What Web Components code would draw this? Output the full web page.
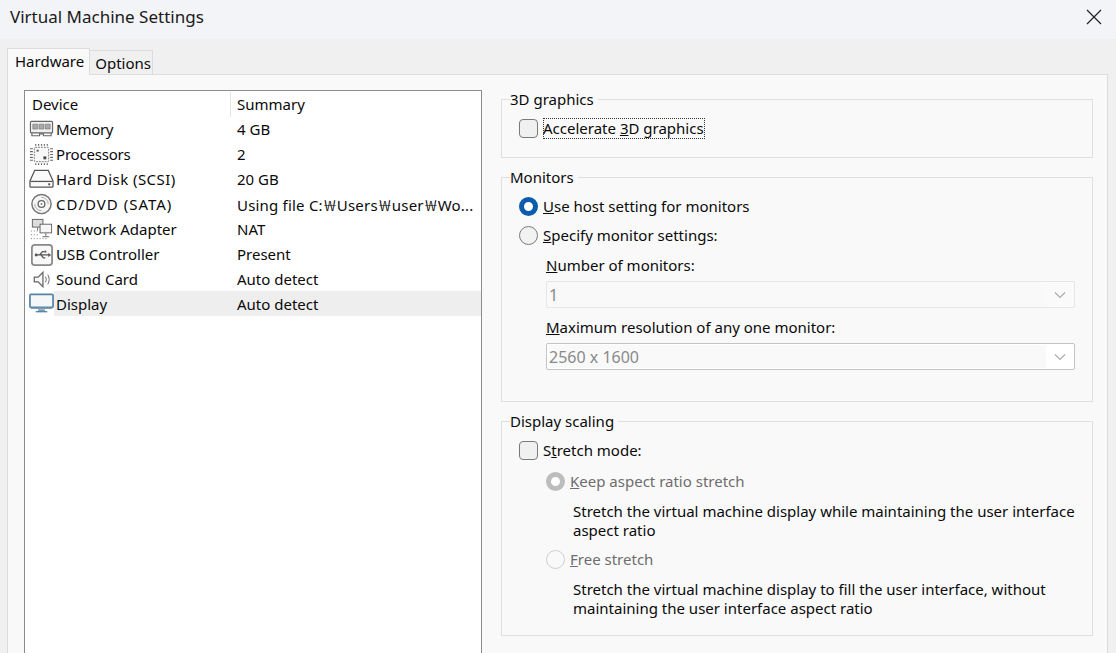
<!DOCTYPE html>
<html>
<head>
<meta charset="utf-8">
<title>Virtual Machine Settings</title>
<style>
  html, body { margin: 0; height: 100%; overflow: hidden; }
  body { font: 15px/21px "Noto Sans", "Open Sans", sans-serif; color: #0a0a0a; background: #f0f0f0; }
</style>
</head>
<body>

<vm-dialog>
  <span slot="title">Virtual Machine Settings</span>

  <device-list slot="left">
    <device-row name="Memory" summary="4 GB" icon="memory" style="--name-spacing:-.3px"></device-row>
    <device-row name="Processors" summary="2" icon="cpu" style="--name-spacing:-.2px"></device-row>
    <device-row name="Hard Disk (SCSI)" summary="20 GB" icon="disk" style="--name-spacing:.45px"></device-row>
    <device-row name="CD/DVD (SATA)" summary="Using file C:₩Users₩user₩Wo..." icon="cd" style="--name-spacing:1px; --sum-spacing:.2px"></device-row>
    <device-row name="Network Adapter" summary="NAT" icon="net"></device-row>
    <device-row name="USB Controller" summary="Present" icon="usb"></device-row>
    <device-row name="Sound Card" summary="Auto detect" icon="sound"></device-row>
    <device-row name="Display" summary="Auto detect" icon="display" selected></device-row>
  </device-list>

  <div slot="right">
    <group-box label="3D graphics" style="height:59px">
      <check-box focused>Accelerate <u>3</u>D graphics</check-box>
    </group-box>

    <group-box label="Monitors" style="height:225px; margin-top:19px">
      <radio-option checked>
        <u>U</u>se host setting for monitors</radio-option>
      <radio-option style="margin-top:8px"><u>S</u>pecify monitor settings:</radio-option>
      <combo-box value="1" style="margin-top:9px"><u>N</u>umber of monitors:</combo-box>
      <combo-box value="2560 x 1600" inner style="margin-top:9px"><u>M</u>aximum resolution of any one monitor:</combo-box>
    </group-box>

    <group-box label="Display scaling" style="height:215px; margin-top:19px">
      <check-box>S<u>t</u>retch mode:</check-box>
      <radio-option checked disabled indent style="margin-top:10px"><u>K</u>eep aspect ratio stretch</radio-option>
      <option-note>Stretch the virtual machine display while maintaining the user interface aspect ratio</option-note>
      <radio-option disabled indent style="margin-top:9px"><u>F</u>ree stretch</radio-option>
      <option-note>Stretch the virtual machine display to fill the user interface, without maintaining the user interface aspect ratio</option-note>
    </group-box>
  </div>
</vm-dialog>

<script>
// Icons for the device list, all on a 26x24 box
const deviceIcons = {
  memory: `<rect x="1.500" y="3.500" width="23" height="12" rx="1" fill="#f0f0f0" stroke="#666" stroke-width="1.200"/>
    <path d="M4 6.500h5v5H4zM10.500 6.500h5v5h-5zM17 6.500h5v5h-5z" fill="#aaa" stroke="#777" stroke-width=".7"/>
    <path d="M3 15.500v3h8v-2h4v2h8v-3" fill="none" stroke="#666" stroke-width="1.200"/>`,
  cpu: `<rect x="5.500" y="4.500" width="15" height="15" rx="1" fill="#f7f7f7" stroke="#777" stroke-dasharray="2 1"/>
    <path d="M7 1v2M10 1v2M13 1v2M16 1v2M19 1v2M7 21v2M10 21v2M13 21v2M16 21v2M19 21v2M1 6h3M1 9h3M1 12h3M1 15h3M1 18h3M22 6h3M22 9h3M22 12h3M22 15h3M22 18h3" stroke="#666" stroke-width="1.200"/>
    <rect x="8" y="7" width="2" height="2" fill="#555"/><rect x="15" y="14" width="3" height="3" fill="#444"/>`,
  disk: `<path d="M6 2.500h14l5 11v5.500a1 1 0 0 1-1 1H2a1 1 0 0 1-1-1v-5.500z" fill="#fafafa" stroke="#555" stroke-width="1.300"/>
    <path d="M1.500 14h23" stroke="#555" stroke-width="1.300"/><rect x="20" y="16" width="2" height="2" fill="#555"/>`,
  cd: `<circle cx="13" cy="11.500" r="10" fill="#f5f5f5" stroke="#777" stroke-width="1.500"/>
    <circle cx="13" cy="11.500" r="3.500" fill="#fff" stroke="#666" stroke-width="1.400"/><circle cx="13" cy="11.500" r="1" fill="#777"/>
    <path d="M13 4.500a7 7 0 0 1 7 7M13 18.500a7 7 0 0 1-7-7" fill="none" stroke="#aaa"/>`,
  net: `<rect x="3.500" y="1.500" width="11" height="8" fill="#ddd" stroke="#666"/><rect x="11.500" y="6.500" width="12" height="9" fill="#f6f6f6" stroke="#666"/>
    <path d="M9 10v3M17.500 16v3M14 19.500h7" stroke="#666"/><path d="M2 13.500h8M2 17.500h1M5 17.500h1M8 17.500h1M2 21.500h16" stroke="#777" stroke-dasharray="1 2"/>`,
  usb: `<rect x="3" y="2" width="21" height="21" rx="3" fill="#f8f8f8" stroke="#888" stroke-width="1.800"/>
    <path d="M7.500 12.500h13M11 12.500l3-3.500h2M12.500 12.500l2.500 3h2" fill="none" stroke="#555" stroke-width="1.300"/>
    <circle cx="7.500" cy="12.500" r="1.500" fill="#555"/><rect x="16" y="8" width="2" height="2" fill="#555"/><path d="M20 10.500l3 2-3 2z" fill="#555"/>`,
  sound: `<path d="M5.500 9.500h4l5-5v15l-5-5h-4z" fill="#f7f7f7" stroke="#666" stroke-width="1.300"/>
    <path d="M17 9c1.200 1.800 1.200 4.200 0 6M19.500 7c2 3 2 7 0 10" fill="none" stroke="#666"/>`,
  display: `<rect x="1" y="1.500" width="24" height="13.500" rx="1" fill="#f4f6f8" stroke="#5784a6" stroke-width="1.800"/>
    <path d="M2 16h22" stroke="#7c9cb4" stroke-width="1.500"/><path d="M9.500 17h7v2h-7z" fill="#7c9cb4"/><path d="M7 19.500h12" stroke="#4d7a9c" stroke-width="1.300"/>`
};

/**
 * Dialog frame: title bar, tab strip and the page with two columns.
 */
class VmDialog extends HTMLElement {
  constructor() {
    super();
    this.attachShadow({ mode: "open" });
    this.shadowRoot.innerHTML = `
      <style>
        :host { display: flex; flex-direction: column; height: 100vh; }
        .titlebar { flex: none; box-sizing: border-box; height: 39px; padding: 0 0 6px 10px; background: #f3f4f8; display: flex; align-items: center; justify-content: space-between; font-size: 17px; color: #1a1a1a; }
        .close { width: 16px; height: 16px; margin-right: 14px; }
        .tabs { flex: none; height: 35px; padding-left: 7px; display: flex; align-items: flex-end; }
        .tab { box-sizing: border-box; background: #f0f0f0; border: 1px solid #dcdcdc; border-bottom: 0; height: 24px; padding: 2px 1px 0 5px; margin-left: -1px; }
        .tab.active { background: #f9f9f9; height: 27px; padding: 2px 5px 0 7px; margin: 0 0 -1px 0; position: relative; z-index: 1; }
        .page { flex: 1; min-height: 0; margin: 0 8px 0 7px; box-sizing: border-box; background: #f9f9f9; border: 1px solid #dcdcdc; border-bottom: 0; padding: 15px 14px 0 16px; display: grid; grid-template-columns: 458px 1fr; column-gap: 19px; }
        .right { padding-top: 9px; }
      </style>
      <div class="titlebar">
        <slot name="title"></slot>
        <svg class="close" viewBox="0 0 16 16"><path d="M1 1l14 14M15 1L1 15" stroke="#222" stroke-width="1.200"/></svg>
      </div>
      <div class="tabs"><div class="tab active">Hardware</div><div class="tab">Options</div></div>
      <div class="page">
        <slot name="left"></slot>
        <div class="right"><slot name="right"></slot></div>
      </div>`;
  }
}

/**
 * Device table with its header row. Rows are passed in through the slot.
 */
class DeviceList extends HTMLElement {
  constructor() {
    super();
    this.attachShadow({ mode: "open" });
    this.shadowRoot.innerHTML = `
      <style>
        :host { display: block; background: #fff; border: 1px solid #8c8c8c; border-bottom: 0; min-height: 0; box-sizing: border-box; }
        .head { display: grid; grid-template-columns: 205px 1fr; height: 24px; padding-top: 1px; line-height: 24px; }
        .head div { padding-left: 7px; height: 25px; }
        .head div + div { border-left: 1px solid #e5e5e5; padding-left: 6px; }
      </style>
      <div class="head"><div>Device</div><div>Summary</div></div>
      <slot></slot>`;
  }
}

/**
 * One row of the device table.
 */
class DeviceRow extends HTMLElement {
  constructor() {
    super();
    this.attachShadow({ mode: "open" });
  }

  connectedCallback() {
    const icon = deviceIcons[this.getAttribute("icon")];
    // the won sign stands in for the backslash, it is drawn wide in the reference
    const summary = this.getAttribute("summary").replace(/₩/g, '<span class="won">₩</span>');
    this.shadowRoot.innerHTML = `
      <style>
        :host { display: grid; grid-template-columns: 29px 178px 1fr; grid-template-rows: 25px; height: 25px; line-height: 27px; white-space: nowrap; }
        svg { width: 25px; height: 25px; margin: 1px 0 0 4px; }
        .name { padding-left: 2px; height: 25px; letter-spacing: var(--name-spacing, 0); }
        .sum { padding-left: 5px; height: 25px; overflow: hidden; letter-spacing: var(--sum-spacing, 0); }
        .won { display: inline-block; width: 14px; text-align: center; font-family: "Noto Sans CJK KR", sans-serif; font-weight: 300; transform: scaleX(1.4); }
        :host([selected]) .name, :host([selected]) .sum { background: #eeeeee; }
      </style>
      <svg viewBox="0 0 26 24">${icon}</svg>
      <div class="name">${this.getAttribute("name")}</div>
      <div class="sum">${summary}</div>`;
  }
}

/**
 * Titled group frame with its legend sitting on the top border.
 */
class GroupBox extends HTMLElement {
  constructor() {
    super();
    this.attachShadow({ mode: "open" });
  }

  connectedCallback() {
    this.shadowRoot.innerHTML = `
      <style>
        :host { display: block; box-sizing: border-box; border: 1px solid #dfdfdf; padding: 0 17px 0 17px; }
        .legend { display: table; margin: -11px 0 8px -9px; height: 21px; padding: 0 4px 0 0; background: #f9f9f9; }
      </style>
      <div class="legend">${this.getAttribute("label")}</div>
      <slot></slot>`;
  }
}

/**
 * Checkbox with a label, optionally showing the dotted focus box.
 */
class CheckBox extends HTMLElement {
  constructor() {
    super();
    this.attachShadow({ mode: "open" });
    this.shadowRoot.innerHTML = `
      <style>
        :host { display: flex; align-items: center; height: 21px; gap: 5px; }
        .box { flex: none; box-sizing: border-box; width: 19px; height: 19px; border: 1px solid #7a7a7a; border-radius: 4px; background: #f0f0f0; }
        .label { padding: 0 1px 0 0; }
        :host([focused]) .label { outline: 1px dotted #333; outline-offset: -1px; }
      </style>
      <span class="box"></span><span class="label"><slot></slot></span>`;
  }
}

/**
 * Radio option, may be checked, disabled or indented under a checkbox.
 */
class RadioOption extends HTMLElement {
  constructor() {
    super();
    this.attachShadow({ mode: "open" });
    this.shadowRoot.innerHTML = `
      <style>
        :host { display: flex; align-items: center; height: 21px; gap: 5px; }
        :host([indent]) { margin-left: 27px; }
        :host([disabled]) { color: #6d6d6d; }
        .dot { flex: none; box-sizing: border-box; width: 19px; height: 19px; border-radius: 50%; border: 1px solid #7a7a7a; background: #f2f2f2; }
        :host([checked]) .dot { border: 5.500px solid #0b5cad; background: #fff; }
        :host([disabled]) .dot { border-color: #cfcfcf; background: #f9f9f9; }
        :host([disabled][checked]) .dot { border-color: #bdbdbd; background: #fff; }
      </style>
      <span class="dot"></span><span><slot></slot></span>`;
  }
}

/**
 * Label with a disabled drop-down under it.
 */
class ComboBox extends HTMLElement {
  constructor() {
    super();
    this.attachShadow({ mode: "open" });
  }

  connectedCallback() {
    this.shadowRoot.innerHTML = `
      <style>
        :host { display: block; margin-left: 27px; }
        .field { box-sizing: border-box; height: 27px; margin-top: 5px; display: flex; align-items: center; justify-content: space-between; background: #fafafa; border: 1px solid #e6e6e6; border-radius: 2px; padding-left: 2px; color: #8a8a8a; }
        :host([inner]) .field { border-color: #c4c4c4; background: #fff; }
        .value { flex: 1; align-self: stretch; line-height: 24px; margin: 1px 0; font-size: 16px; background: #f9f9f9; }
        .arrow { flex: none; width: 28px; height: 25px; display: flex; align-items: center; justify-content: center; }
        svg { width: 12px; height: 8px; }
      </style>
      <slot></slot>
      <div class="field">
        <span class="value">${this.getAttribute("value")}</span>
        <span class="arrow"><svg viewBox="0 0 12 8"><path d="M1 1.500l5 5 5-5" fill="none" stroke="#aaa" stroke-width="1.100"/></svg></span>
      </div>`;
  }
}

/**
 * Help text under a radio option.
 */
class OptionNote extends HTMLElement {
  constructor() {
    super();
    this.attachShadow({ mode: "open" });
    this.shadowRoot.innerHTML = `
      <style>
        :host { display: block; margin: 10px 0 0 54px; line-height: 19px; }
      </style>
      <slot></slot>`;
  }
}

customElements.define("vm-dialog", VmDialog);
customElements.define("device-list", DeviceList);
customElements.define("device-row", DeviceRow);
customElements.define("group-box", GroupBox);
customElements.define("check-box", CheckBox);
customElements.define("radio-option", RadioOption);
customElements.define("combo-box", ComboBox);
customElements.define("option-note", OptionNote);
</script>
</body>
</html>
